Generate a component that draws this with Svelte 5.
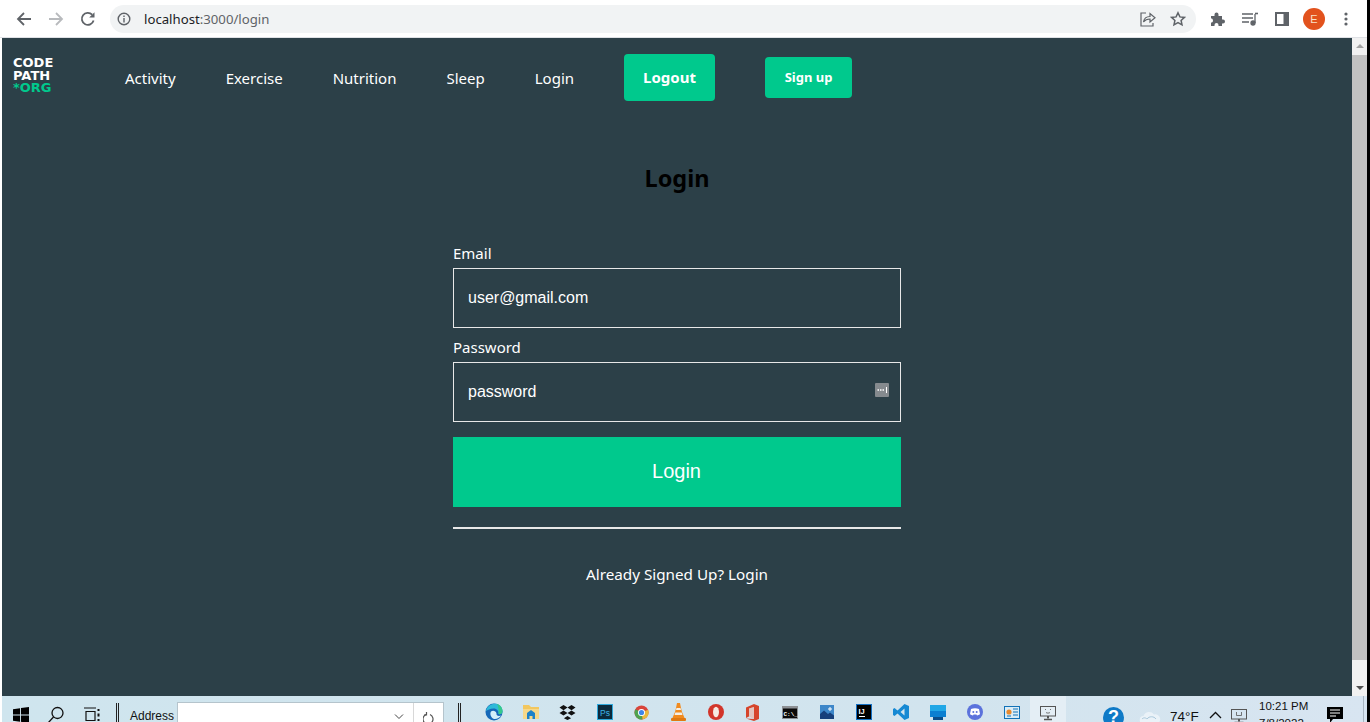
<script>
  let email = 'user@gmail.com';
  let password = 'password';
  const links = ['Activity', 'Exercise', 'Nutrition', 'Sleep', 'Login'];
</script>

<div class="screen">
  <header class="browser">
    <div class="nav-btns">
      <svg width="16" height="16" viewBox="0 0 16 16" fill="none" stroke="#5f6368" stroke-width="1.8"><path d="M15 8H2M8 2 2 8l6 6"/></svg>
      <svg width="16" height="16" viewBox="0 0 16 16" fill="none" stroke="#b8babd" stroke-width="1.8"><path d="M1 8h13M8 2l6 6-6 6"/></svg>
      <svg width="16" height="16" viewBox="0 0 16 16" fill="none" stroke="#5f6368" stroke-width="1.8"><path d="M13.6 9.5A6 6 0 1 1 12.2 3.7"/><path d="M14.5 1.2v5.3H9.2z" fill="#5f6368" stroke="none"/></svg>
    </div>
    <div class="omnibox">
      <svg width="14" height="14" viewBox="0 0 14 14" fill="none" stroke="#5f6368" stroke-width="1.4"><circle cx="7" cy="7" r="5.8"/><path d="M7 6v4.4M7 3.4v1.6"/></svg>
      <span class="url">localhost<span class="dim">:3000/login</span></span>
      <span class="spacer"></span>
      <svg width="16" height="16" viewBox="0 0 16 16" fill="none" stroke="#5f6368" stroke-width="1.2"><path d="M6 2H1v13h12v-3"/><path d="M3.5 11c.5-3.500 3-5.500 6.500-5.500V2.500L15 6.800 10 11V8C7.500 8 5 9 3.500 11z"/></svg>
      <svg width="16" height="16" viewBox="0 0 16 16" fill="none" stroke="#5f6368" stroke-width="1.5"><path d="m8 1.800 1.900 4.100 4.500.5-3.300 3 .9 4.400L8 11.600l-4 2.200.9-4.400-3.300-3 4.500-.5z"/></svg>
    </div>
    <div class="tools">
      <svg width="16" height="16" viewBox="0 0 16 16" fill="#5f6368"><path d="M1 5h3.500V3.500a2 2 0 0 1 4 0V5H12v3.500h1a2 2 0 0 1 0 4h-1V15H8.500v-1a2 2 0 0 0-4 0v1H1v-3.500h1a2.500 2.500 0 0 0 0-4H1z"/></svg>
      <svg width="16" height="14" viewBox="0 0 16 14" fill="none" stroke="#5f6368" stroke-width="1.300"><path d="M0 2h11M0 6h11M0 10h7M13 2v9"/><path d="M13 1.500h3" stroke-width="1.600"/><circle cx="11" cy="11" r="2" fill="#5f6368"/></svg>
      <svg width="14" height="14" viewBox="0 0 14 14" fill="none" stroke="#5f6368"><rect x="1" y="1" width="12" height="12" stroke-width="2"/><rect x="8.500" y="1" width="4.500" height="12" fill="#5f6368" stroke="none"/></svg>
      <span class="avatar">E</span>
      <svg width="4" height="14" viewBox="0 0 4 14" fill="#5f6368"><circle cx="2" cy="2" r="1.600"/><circle cx="2" cy="7" r="1.600"/><circle cx="2" cy="12" r="1.600"/></svg>
    </div>
  </header>

  <div class="viewport">
    <main class="page">
      <nav class="navbar">
        <div class="logo"><span>CODE</span><span>PATH</span><span class="org">*ORG</span></div>
        <ul class="links">
          {#each links as link}
            <li><a href="#/">{link}</a></li>
          {/each}
        </ul>
        <button class="logout">Logout</button>
        <button class="signup">Sign up</button>
      </nav>

      <section class="login">
        <h1>Login</h1>
        <form class="form" on:submit|preventDefault>
          <label for="email">Email</label>
          <input id="email" type="text" bind:value={email} />
          <label for="password">Password</label>
          <div class="pw">
            <input id="password" type="text" bind:value={password} />
            <svg class="key" width="14" height="14" viewBox="0 0 14 14"><rect width="14" height="14" rx="1" fill="#858a8e"/><path d="M2.500 7h1.500M5 7h1.500M7.500 7H9" stroke="#fff" stroke-width="1.600"/><path d="M11.500 4v6" stroke="#fff"/></svg>
          </div>
          <button class="submit" type="submit">Login</button>
          <hr />
          <p class="already">Already Signed Up? Login</p>
        </form>
      </section>
    </main>
    <aside class="scrollbar">
      <span class="arrow up"></span>
      <span class="thumb"></span>
      <span class="arrow down"></span>
    </aside>
  </div>

  <footer class="taskbar">
    <svg class="t-win" width="16" height="16" viewBox="0 0 17 17" fill="#000"><path d="M0 2.500 7.500 1.300v6.600H0zM8.500 1.100 17 0v7.900H8.500zM0 9h7.500v6.700L0 14.500zM8.500 9H17v8l-8.500-1.200z"/></svg>
    <svg class="t-search" width="18" height="18" viewBox="0 0 18 18" fill="none" stroke="#111" stroke-width="1.300"><circle cx="10.500" cy="7" r="5.500"/><path d="M6.500 11 1 17"/></svg>
    <svg class="t-view" width="18" height="18" viewBox="0 0 18 18" fill="none" stroke="#111" stroke-width="1.200"><path d="M1 1h12M3 4.500h9v9H3zM1 16.500h12"/><path d="M15.500 2v2M15.500 6.500v3M15.500 12v2" stroke-width="2"/></svg>
    <span class="grip g1"></span>
    <span class="addr-label">Address</span>
    <div class="addr">
      <span class="addr-field">
        <svg width="10" height="6" viewBox="0 0 10 6" fill="none" stroke="#444"><path d="m1 .5 4 4 4-4"/></svg>
      </span>
      <span class="addr-go">
        <svg width="12" height="14" viewBox="0 0 12 14" fill="none" stroke="#555" stroke-width="1.200"><path d="M3 3.500a5 5 0 1 0 4 0"/><path d="M3.500 1v3H1"/></svg>
      </span>
    </div>
    <span class="grip g2"></span>

    <div class="apps">
      <svg width="18" height="18" viewBox="0 0 18 18"><circle cx="9" cy="9" r="8.500" fill="#1668b8"/><path d="M1 8C2 2 8 .2 12 1c4 1 5.500 4.500 5.500 7.500 0 2-2 3-4 2.500C14 8 12 5.500 8.500 5.500 5 5.500 2.500 7 1 8z" fill="#2fb9d8"/><path d="M12 1c4 1 5.500 4.500 5.500 7.500 0 2-2 3-4 2.500C14 7 13.500 4 12 1z" fill="#35c98c"/><path d="M6 8.500c2-1.500 5-.5 5.500 2-.5 2 2 3 4.500 2-1.500 2.500-4.500 4-7 3.500C6 15 4.500 11 6 8.500z" fill="#d4effa"/></svg>
      <svg width="18" height="16" viewBox="0 0 18 16"><path d="M1 1h6l2 2h8v11H1z" fill="#f2c75f"/><path d="M1 5h16v10H1z" fill="#f6d88a"/><path d="M5 15V9l4-3 4 3v6h-2.500v-3h-3v3z" fill="#1d82c9"/></svg>
      <svg width="17" height="15" viewBox="0 0 17 15" fill="#111"><path d="m4.500 0 4 2.600-4 2.600-4-2.600zM12.500 0l4 2.600-4 2.600-4-2.600zM4.500 5.400l4 2.600-4 2.600-4-2.600zM12.500 5.400l4 2.600-4 2.600-4-2.600zM8.500 10.900l3.600 2.300-3.600 1.800-3.600-1.800z"/></svg>
      <svg width="16" height="16" viewBox="0 0 16 16"><rect x=".5" y=".5" width="15" height="15" fill="#0b2a3c" stroke="#2fa9dc"/><text x="3" y="11.500" font-size="8.500" font-family="Liberation Sans, sans-serif" fill="#3fb4e8">Ps</text></svg>
      <svg width="15" height="15" viewBox="0 0 32 32"><circle cx="16" cy="16" r="15" fill="#d9443a"/><path d="M16 16 30 10a15 15 0 0 1-12 21z" fill="#e9b93c"/><path d="M16 16 18 31A15 15 0 0 1 3 9z" fill="#4ea350"/><circle cx="16" cy="16" r="7.500" fill="#fff"/><circle cx="16" cy="16" r="5.500" fill="#3f86e8"/></svg>
      <svg width="15" height="18" viewBox="0 0 15 18"><path d="M6 0h3l1 5 1 4 3 7H1l3-7 1-4z" fill="#f18b1f"/><path d="M5.500 5h4l.5 2H5zM4.300 9.500h6.400l.8 2.500H3.500z" fill="#f4efe6"/><rect y="15" width="15" height="3" rx="1" fill="#e07912"/></svg>
      <svg width="16" height="16" viewBox="0 0 16 16"><circle cx="8" cy="8" r="8" fill="#d2352a"/><ellipse cx="8" cy="8" rx="3" ry="5.300" fill="#f6e9e1"/></svg>
      <svg width="13" height="17" viewBox="0 0 13 17"><path d="M8 0l5 2v13l-5 2-8-2.500 8 .5V3L3 4.500v8L0 14V3.500z" fill="#d6452b"/><path d="M3 4.500 8 3v12l-5-2.500z" fill="#f3a58f" opacity=".5"/></svg>
      <svg width="16" height="13" viewBox="0 0 16 13"><rect width="16" height="13" fill="#8d9195"/><rect x="1" y="2.500" width="14" height="9.500" fill="#0a0a0a"/><text x="1.500" y="9.500" font-size="6" font-family="Liberation Mono, monospace" font-weight="700" fill="#fff">C:\_</text></svg>
      <svg width="14" height="14" viewBox="0 0 14 14"><rect width="14" height="14" fill="#3d87c9"/><path d="M0 14V9l4-3.500L8 9l2-1.500 4 3V14z" fill="#163f7b"/><path d="M10 2v4M8 4h4" stroke="#fff"/></svg>
      <svg width="16" height="16" viewBox="0 0 16 16"><rect width="16" height="16" fill="#1470c4"/><rect x="1" y="1" width="14" height="14" fill="#000"/><text x="2.500" y="9.500" font-size="7.500" font-weight="700" font-family="Liberation Sans, sans-serif" fill="#fff">IJ</text><path d="M3 12.500h6" stroke="#fff"/></svg>
      <svg width="16" height="16" viewBox="0 0 16 16" fill="#1689d3"><path d="M11.500 0 16 2v12l-4.500 2L4.500 9.500 1.500 12 0 11V5l1.500-1 3 2.500zM11.500 4.500 7.500 8l4 3.500z"/></svg>
      <svg width="16" height="16" viewBox="0 0 16 16"><rect y="1" width="16" height="12" fill="#0b7fd1"/><rect y="1" width="16" height="6" fill="#20a7e6"/><rect x="3" y="13" width="10" height="3" fill="#0a4d8a"/></svg>
      <svg width="16" height="16" viewBox="0 0 16 16"><circle cx="8" cy="8" r="8" fill="#5b72dc"/><path d="M4 5c2.500-1 5.500-1 8 0l1 5c-1 1-2 1.400-3 1.500l-.6-1H6.600l-.6 1c-1-.100-2-.500-3-1.500z" fill="#fff"/><circle cx="6.300" cy="8" r="1" fill="#5b72dc"/><circle cx="9.700" cy="8" r="1" fill="#5b72dc"/></svg>
      <svg width="16" height="13" viewBox="0 0 16 13"><rect width="16" height="13" fill="#1172b8"/><rect x="1" y="1" width="14" height="11" fill="#d9ecf6"/><circle cx="5" cy="6" r="2.600" fill="#e8892c"/><path d="M9 3h5M9 6h5M9 9h5M3 10h4" stroke="#1172b8"/></svg>
    </div>

    <div class="active-app">
      <svg width="16" height="16" viewBox="0 0 16 16" fill="none" stroke="#555"><rect x=".5" y="1.500" width="15" height="9.500"/><path d="M8 11v2.500" stroke-width="2"/><path d="M4 14.500h8" stroke-width="1.500"/><path d="M5.500 4v1M10.500 4v1M6 7.500c1 .8 3 .8 4 0" stroke-width=".8"/></svg>
    </div>

    <div class="tray">
      <span class="help">?</span>
      <svg class="cloud" width="22" height="13" viewBox="0 0 22 13"><path d="M5 13a4 4 0 0 1-.5-8A6 6 0 0 1 15 3.500 4.800 4.800 0 0 1 17.500 13z" fill="#eaf2f8"/><path d="M3 8c2-2 4-1 5 0 2-3 7-3 9 0" fill="none" stroke="#a9c8dc"/></svg>
      <span class="temp">74°F</span>
      <svg class="caret" width="13" height="8" viewBox="0 0 13 8" fill="none" stroke="#111" stroke-width="1.300"><path d="m1 7 5.500-5.500L12 7"/></svg>
      <svg class="net" width="16" height="15" viewBox="0 0 16 15" fill="none" stroke="#555"><rect x=".5" y=".5" width="15" height="9.500"/><path d="M8 10v2.500" stroke-width="2"/><path d="M3.500 13.500h9" stroke-width="1.500"/><path d="M5.500 3v3.500h5V3" stroke-width=".8"/></svg>
      <div class="clock"><span>10:21 PM</span><span>7/8/2022</span></div>
      <svg class="notes" width="16" height="16" viewBox="0 0 16 16"><path d="M0 0h16v12H6l-3 4v-4H0z" fill="#000"/><path d="M3 3h10M3 6h10M3 9h6" stroke="#fff"/></svg>
      <span class="edge"></span>
    </div>
  </footer>
</div>

<style>
  :global(body) {
    margin: 0;
    overflow: hidden;
  }

  .screen {
    width: 1370px;
    height: 722px;
    box-sizing: border-box;
    padding-right: 3px;
    display: flex;
    flex-direction: column;
    overflow: hidden;
    font-family: "Noto Sans", sans-serif;
    background: #000;
  }

  .browser {
    height: 37px;
    flex: none;
    display: flex;
    align-items: center;
    background: #fff;
    border-bottom: 1px solid #dfe1e5;
    padding: 0 0 0 16px;
  }

  .nav-btns {
    display: flex;
    gap: 16px;
    align-items: center;
    margin-right: 14px;
  }

  .omnibox {
    width: 1086px;
    height: 28px;
    box-sizing: border-box;
    border-radius: 14px;
    background: #f1f3f4;
    display: flex;
    align-items: center;
    padding: 0 10px 0 7px;
    gap: 14px;
    font: 13.2px "Noto Sans", sans-serif;
    color: #202124;
  }

  .url { margin-left: -1px; }
  .dim { color: #5f6368; }
  .spacer { flex: 1; }

  .tools {
    display: flex;
    align-items: center;
    margin-left: 14px;
    gap: 16px;
  }

  .tools svg:nth-child(3) { margin-left: 1px; }

  .avatar {
    width: 22px;
    height: 22px;
    border-radius: 50%;
    background: #e2521d;
    color: #f9e2c9;
    font: 11px/22px "Liberation Sans", sans-serif;
    text-align: center;
    margin-left: -2px;
    margin-right: 3px;
  }

  .viewport {
    flex: none;
    height: 658px;
    display: flex;
    background: #fff;
    padding-left: 2px;
  }

  .page {
    width: 1350px;
    background: #2c4048;
    color: #fff;
    font-size: 15px;
  }

  .navbar {
    display: flex;
    align-items: center;
    height: 76px;
    padding: 2px 0 0 11px;
    box-sizing: border-box;
  }

  .logo {
    display: flex;
    flex-direction: column;
    width: 40px;
    margin-right: 72px;
    margin-top: -2px;
    font: 700 13px/12.5px "DejaVu Sans", sans-serif;
  }

  .org { color: #00c98d; }

  .links {
    display: flex;
    gap: 50px;
    list-style: none;
    margin: 0;
    padding: 2px 0 0;
  }

  .links a {
    color: #fff;
    text-decoration: none;
  }

  button {
    border: 0;
    font-family: inherit;
    color: #fff;
    background: #00c98d;
    cursor: pointer;
  }

  .logout {
    width: 91px;
    height: 47px;
    margin-left: 50px;
    border-radius: 4px;
    font-weight: 700;
    font-size: 15px;
    padding: 0;
  }

  .signup {
    width: 87px;
    height: 41px;
    margin-left: 50px;
    border-radius: 4px;
    font-weight: 700;
    font-size: 13px;
    padding: 0;
  }

  .login {
    display: flex;
    flex-direction: column;
    align-items: center;
  }

  h1 {
    margin: 48px 0 0;
    font-size: 23.5px;
    line-height: 32px;
    color: #000;
    font-weight: 700;
  }

  .form {
    width: 448px;
    display: flex;
    flex-direction: column;
    margin-top: 49px;
  }

  label {
    line-height: 20px;
    margin-bottom: 5px;
  }

  input {
    width: 100%;
    height: 60px;
    box-sizing: border-box;
    background: transparent;
    border: 1px solid #e8e8e8;
    border-radius: 0;
    padding: 0 14px;
    color: #fff;
    font: 16px "Liberation Sans", sans-serif;
    outline: none;
    display: block;
    margin-bottom: 9px;
  }

  .pw { position: relative; }

  .key {
    position: absolute;
    right: 12px;
    top: 21px;
  }

  .submit {
    height: 70px;
    margin-top: 6px;
    padding: 0 1px 2px 0;
    font: 20px "Liberation Sans", sans-serif;
  }

  hr {
    width: 100%;
    margin: 20px 0 0;
    border: 0;
    border-top: 2px solid #e8e8e8;
  }

  .already {
    margin: 35px 0 0;
    text-align: center;
    line-height: 20px;
    font-size: 15.25px;
  }

  .scrollbar {
    width: 15px;
    background: #f1f1f1;
    display: flex;
    flex-direction: column;
    align-items: center;
    position: relative;
  }

  .arrow {
    position: absolute;
    border-left: 4px solid transparent;
    border-right: 4px solid transparent;
  }

  .arrow.up {
    top: 6px;
    border-bottom: 4px solid #a3a3a3;
  }

  .arrow.down {
    bottom: 6px;
    border-top: 4px solid #505050;
  }

  .thumb {
    width: 15px;
    height: 605px;
    margin-top: 17px;
    background: #c1c1c1;
  }

  .taskbar {
    flex: none;
    height: 40px;
    display: flex;
    align-items: flex-start;
    background: linear-gradient(90deg, #cfe5ee, #d2e4ee 70%, #d8e5f1);
    border-left: 2px solid #fff;
    position: relative;
    color: #111;
    font-family: "Liberation Sans", sans-serif;
  }

  .t-win { margin: 11px 0 0 11px; }
  .t-search { margin: 10px 0 0 18px; }
  .t-view { margin: 11px 0 0 18px; }

  .grip {
    width: 1px;
    height: 40px;
    border-left: 1px solid #222;
    border-right: 1px solid #222;
    margin-top: 7px;
    flex: none;
  }

  .g1 { margin-left: 15px; }
  .g2 { margin-left: 14px; }

  .addr-label {
    font-size: 12px;
    margin: 13px 0 0 11px;
  }

  .addr {
    width: 267px;
    height: 30px;
    margin: 6px 0 0 3px;
    display: flex;
    background: #fff;
    border: 1px solid #b5c4cc;
    box-sizing: border-box;
  }

  .addr-field {
    flex: 1;
    border-right: 1px solid #d8d8d8;
    display: flex;
    justify-content: flex-end;
    padding: 11px 9px 0 0;
  }

  .addr-go {
    width: 29px;
    padding: 8px 0 0 9px;
    box-sizing: border-box;
  }

  .apps {
    display: grid;
    grid-auto-flow: column;
    grid-auto-columns: 37px;
    justify-items: center;
    align-items: center;
    height: 18px;
    margin: 7px 0 0 14px;
  }

  .active-app {
    width: 36px;
    height: 40px;
    background: #e4eef5;
    padding: 9px 0 0 10px;
    box-sizing: border-box;
  }

  .tray {
    flex: 1;
    position: relative;
    display: flex;
    align-items: flex-start;
  }

  .help {
    width: 21px;
    height: 21px;
    margin: 11px 0 0 37px;
    border-radius: 50%;
    background: #0f7ac7;
    color: #fff;
    font: 700 18px/21px "Liberation Sans", sans-serif;
    text-align: center;
  }

  .cloud { margin: 15px 0 0 15px; }

  .temp {
    width: 27px;
    font-size: 13.5px;
    white-space: nowrap;
    margin: 13px 0 0 9px;
  }

  .caret { margin: 15px 0 0 12px; }
  .net { margin: 13px 0 0 9px; }

  .clock {
    display: flex;
    flex-direction: column;
    align-items: flex-start;
    width: 48px;
    margin: 2px 0 0 12px;
    font-size: 11.5px;
    line-height: 17px;
    white-space: nowrap;
  }

  .notes { margin: 11px 0 0 20px; }

  .edge {
    position: absolute;
    right: 3px;
    top: 0;
    width: 1px;
    height: 40px;
    background: #a9b6c2;
  }
</style>
